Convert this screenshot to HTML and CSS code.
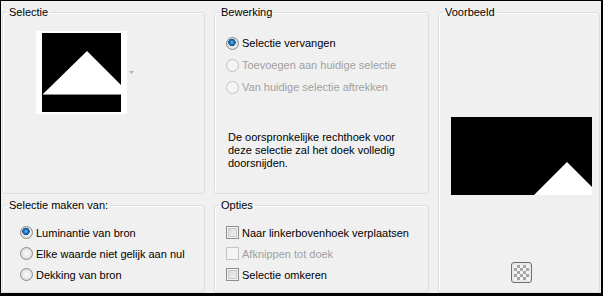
FILE: index.html
```html
<!DOCTYPE html>
<html>
<head>
  <title>Selectie uit afbeelding</title>
  <meta charset="UTF-8">
  <link rel="stylesheet" href="styles.css">
</head>
<body>
  <div class="dialog">
    <fieldset class="group group-selection">
      <legend>Selectie</legend>
      <div class="thumb-row">
        <div class="thumb">
          <svg width="79" height="79" viewBox="0 0 79 79">
            <rect width="79" height="79" fill="#000"/>
            <polygon points="1,61 45,18 88,61" fill="#fff"/>
            <line x1="1" y1="61.5" x2="79" y2="61.5" stroke="#8a8a8a" stroke-width="1"/>
          </svg>
        </div>
        <svg class="drop-arrow" width="5" height="3" viewBox="0 0 5 3">
          <polygon points="0,0 5,0 2.5,3" fill="#b4b4b4"/>
        </svg>
      </div>
    </fieldset>

    <fieldset class="group group-edit">
      <legend>Bewerking</legend>
      <div class="options">
        <label class="opt"><span class="radio checked"></span>Selectie vervangen</label>
        <label class="opt disabled"><span class="radio"></span>Toevoegen aan huidige selectie</label>
        <label class="opt disabled"><span class="radio"></span>Van huidige selectie aftrekken</label>
      </div>
      <p class="note">De oorspronkelijke rechthoek voor<br>deze selectie zal het doek volledig<br>doorsnijden.</p>
    </fieldset>

    <fieldset class="group group-preview">
      <legend>Voorbeeld</legend>
      <div class="preview">
        <svg width="141" height="78" viewBox="0 0 141 78">
          <rect width="141" height="78" fill="#000"/>
          <polygon points="83,78 116,45 141,70 141,78" fill="#fff"/>
        </svg>
      </div>
      <button class="checker-btn" type="button" title="Transparantie"><span class="checker"></span></button>
    </fieldset>

    <fieldset class="group group-source">
      <legend>Selectie maken van:</legend>
      <div class="options compact">
        <label class="opt"><span class="radio checked"></span>Luminantie van bron</label>
        <label class="opt"><span class="radio"></span>Elke waarde niet gelijk aan nul</label>
        <label class="opt"><span class="radio"></span>Dekking van bron</label>
      </div>
    </fieldset>

    <fieldset class="group group-options">
      <legend>Opties</legend>
      <div class="options compact">
        <label class="opt"><span class="check"></span>Naar linkerbovenhoek verplaatsen</label>
        <label class="opt disabled"><span class="check"></span>Afknippen tot doek</label>
        <label class="opt"><span class="check"></span>Selectie omkeren</label>
      </div>
    </fieldset>
  </div>
</body>
</html>
```

FILE: styles.css
```css
:root {
  --face: #f0f0f0;
  --frame: #d5dfe5;
  --text: #000;
  --disabled: #a0a0a0;
}

body {
  margin: 0;
  font-family: "Liberation Sans", Arial, sans-serif;
  font-size: 11px;
  color: var(--text);
}

.dialog {
  box-sizing: border-box;
  width: 603px;
  height: 296px;
  border-style: solid;
  border-color: #000;
  border-width: 1px 2px 3px 1px;
  padding: 5px 0 0 1px;
  background-color: var(--face);
  display: grid;
  grid-template-columns: 203px 215px 162px;
  grid-template-rows: 188px 94px;
  column-gap: 9px;
  row-gap: 5px;
}

.group {
  margin: 0;
  padding: 0;
  min-width: 0;
  border: 1px solid var(--frame);
  border-radius: 3px;
  box-shadow: inset 1px 1px 0 #fff;
}

.group legend {
  margin-left: 4px;
  padding: 0 2px;
  line-height: 13px;
}

/* Selectie */
.thumb-row {
  display: flex;
  align-items: center;
  padding: 12px 0 0 33px;
}

.thumb {
  background-color: #fff;
  padding: 2px 6px;
  line-height: 0;
}

.drop-arrow {
  margin-left: 2px;
}

/* radio / checkbox rows */
.options {
  display: flex;
  flex-direction: column;
  padding: 13px 0 0 11px;
}

.opt {
  display: flex;
  align-items: center;
  height: 22px;
}

.options.compact .opt {
  height: 21px;
}

.group-source .options {
  padding: 10px 0 0 17px;
}

.group-options .options {
  padding-top: 10px;
}

.opt.disabled {
  color: var(--disabled);
}

.radio {
  box-sizing: border-box;
  flex: none;
  width: 13px;
  height: 13px;
  margin-right: 3px;
  border: 1px solid #8b8b8b;
  border-radius: 50%;
  background: radial-gradient(circle at 50% 50%, #fafafa 0, #e6e6e6 55%, #d0d0d0 100%);
}

.radio.checked {
  background:
    radial-gradient(circle at 45% 40%, #7cc8f4 0, #2a84c8 1.5px, #154f8e 3.5px, transparent 4px),
    radial-gradient(circle at 50% 50%, #fafafa 0, #e6e6e6 55%, #d0d0d0 100%);
}

.opt.disabled .radio {
  border-color: #c2c2c2;
  background: #f4f4f4;
}

.check {
  box-sizing: border-box;
  flex: none;
  width: 13px;
  height: 13px;
  margin-right: 3px;
  border: 1px solid #8e8f8f;
  background: linear-gradient(135deg, #d4d4d4, #f6f6f6);
  box-shadow: inset 0 0 0 1px #f4f4f4, inset 0 0 0 2px #c9c9c9;
}

.opt.disabled .check {
  border-color: #c4c4c4;
  background: #f4f4f4;
  box-shadow: none;
}

.note {
  margin: 33px 0 0 13px;
  line-height: 13px;
}

/* Voorbeeld */
.group-preview {
  grid-column: 3;
  grid-row: 1 / 3;
  display: flex;
  flex-direction: column;
}

.preview {
  margin: 98px 0 0 12px;
  line-height: 0;
}

.checker-btn {
  box-sizing: border-box;
  width: 21px;
  height: 21px;
  margin: 67px 0 0 72px;
  padding: 2px;
  border: 1px solid #707070;
  border-radius: 3px;
  background-color: #e9e9e9;
  line-height: 0;
}

.checker {
  display: block;
  width: 15px;
  height: 15px;
  background-color: #f4f4f4;
  background-image: conic-gradient(#a6a6a6 25%, #f4f4f4 0 50%, #a6a6a6 0 75%, #f4f4f4 0);
  background-size: 6px 6px;
}
```
